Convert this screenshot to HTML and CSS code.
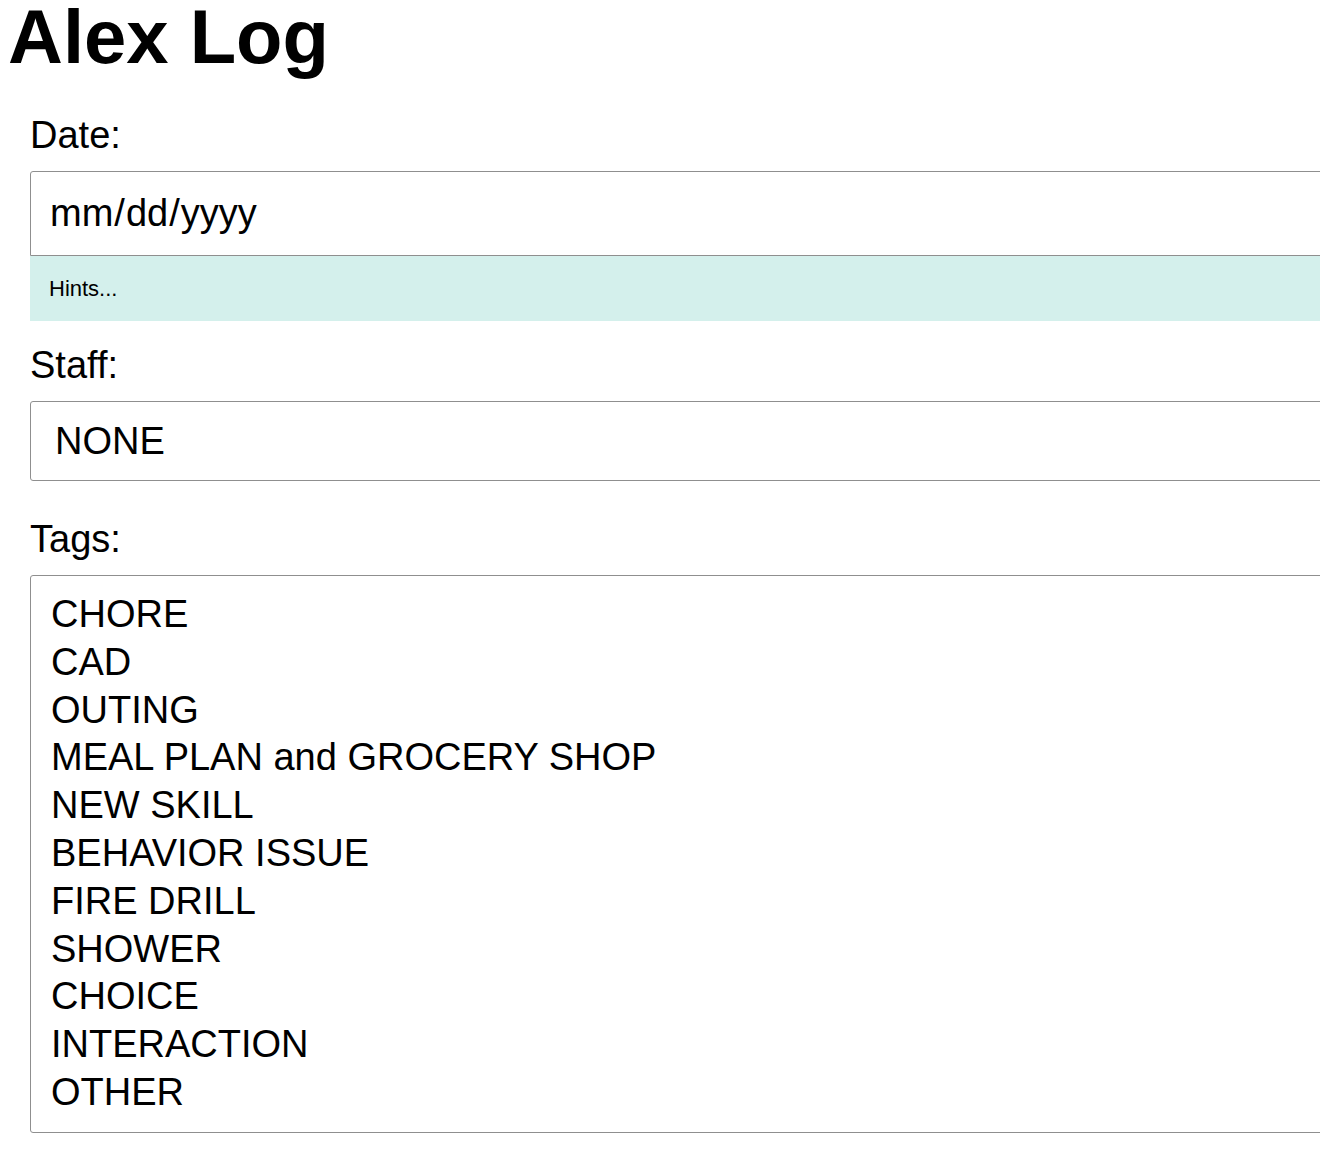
FILE: index.html
```html
<!DOCTYPE html>
<html lang="en">
<head>
    <meta charset="UTF-8">
    <meta name="viewport" content="width=device-width, initial-scale=1.0">
    <title>Alex Log</title>
    <link rel="stylesheet" href="styles.css">
</head>
<body>
<h1>Alex Log</h1>

<form id="logForm">
    <div class="field">
        <label for="logDate">Date:</label>
        <input type="date" id="logDate">
        <div class="hint">Hints...</div>
    </div>

    <div class="field field-staff">
        <label for="staff">Staff:</label>
        <select id="staff">
            <option value="NONE">NONE</option>
        </select>
    </div>

    <div class="field">
        <label for="tags">Tags:</label>
        <select id="tags" multiple>
            <option>CHORE</option>
            <option>CAD</option>
            <option>OUTING</option>
            <option>MEAL PLAN and GROCERY SHOP</option>
            <option>NEW SKILL</option>
            <option>BEHAVIOR ISSUE</option>
            <option>FIRE DRILL</option>
            <option>SHOWER</option>
            <option>CHOICE</option>
            <option>INTERACTION</option>
            <option>OTHER</option>
        </select>
    </div>
</form>
</body>
</html>
```

FILE: styles.css
```css
html, body {
    overflow-x: hidden;
}
body {
    font-family: 'Liberation Sans', Arial, Helvetica, sans-serif;
    margin: 0 0 0 8px;
    color: #000;
    background: #fff;
}
h1 {
    font-size: 76px;
    line-height: 1;
    margin: -1px 0 0;
}
form {
    margin: 39px 0 0 22px;
}
.field {
    margin-bottom: 37px;
}
.field-staff {
    margin-top: -14px;
}
label {
    display: block;
    font-size: 38px;
    margin-bottom: 14px;
}
input[type="date"], select {
    display: block;
    box-sizing: border-box;
    width: 1400px;
    font-family: inherit;
    color: #000;
    background-color: #fff;
    border: 1px solid #8f8f8f;
    border-radius: 3px;
}
input[type="date"] {
    height: 85px;
    font-size: 38px;
    padding: 0 18px;
    border-bottom-left-radius: 0;
    border-bottom-right-radius: 0;
}
.hint {
    width: 1400px;
    box-sizing: border-box;
    background-color: #d4f0ec;
    font-size: 22px;
    padding: 20px 19px 19px;
}
#staff {
    height: 80px;
    font-size: 38px;
    padding: 0 20px;
}
#tags {
    height: 558px;
    font-size: 38px;
    padding: 17px 20px 13px;
    overflow: hidden;
}
#tags option {
    padding: 0;
    line-height: 47.8px;
    min-height: 47.8px;
}
```
